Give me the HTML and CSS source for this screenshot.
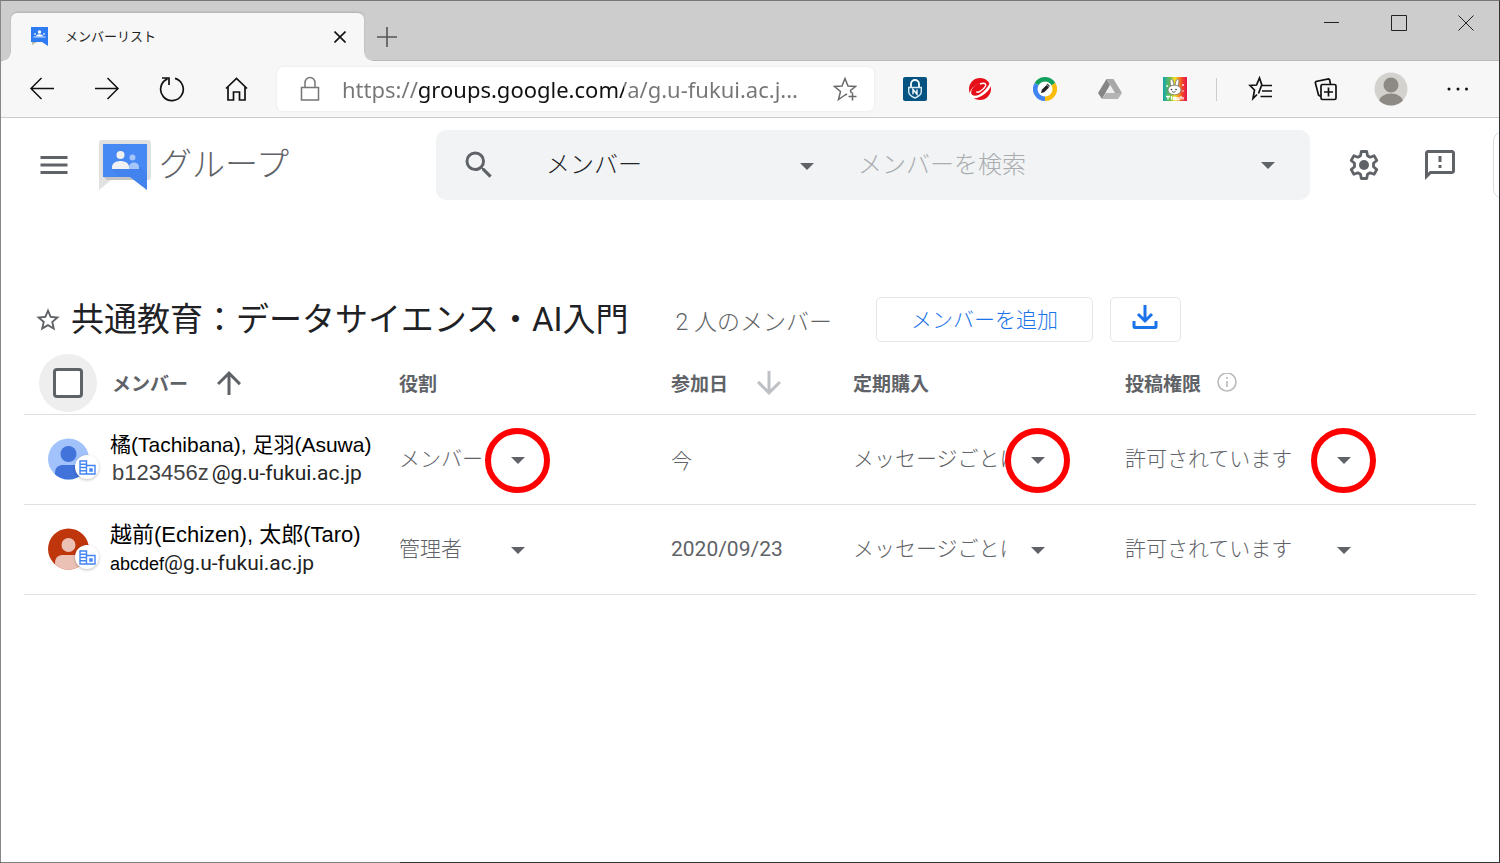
FILE: index.html
```html
<!DOCTYPE html>
<html lang="ja">

<head>
  <meta charset="UTF-8">
  <meta name="viewport" content="width=device-width, initial-scale=1.0">
  <title>メンバーリスト</title>
  <link rel="stylesheet" href="styles.css">
</head>

<body>
  <div class="window">
    <!-- Tab strip -->
    <div class="tab-strip">
      <div class="tab">
        <svg class="tab-icon" viewBox="0 0 18 20" width="18" height="20">
          <path d="M1 13h8l-8 5z" fill="#b8b8a8" />
          <path d="M0 0h17v19l-6-4H0z" fill="#2f7bf3" />
          <circle cx="8.500" cy="5" r="1.700" fill="#fff" />
          <path d="M5 9.500c0-3 7-3 7 0z" fill="#fff" />
          <path d="M2.500 9.500h12v1h-12z" fill="#cfe0ff" />
          <circle cx="4" cy="7" r="1" fill="#cfe0ff" />
          <circle cx="13" cy="7" r="1" fill="#cfe0ff" />
        </svg>
        <span class="tab-title">メンバーリスト</span>
        <button class="tab-close" aria-label="タブを閉じる">
          <svg viewBox="0 0 12 12" width="12" height="12" fill="none" stroke="#111" stroke-width="1.6">
            <path d="M.5.5l11 11M11.500.5l-11 11" />
          </svg>
        </button>
      </div>
      <button class="new-tab" aria-label="新しいタブ">
        <svg viewBox="0 0 20 20" width="20" height="20" fill="none" stroke="#555" stroke-width="1.6">
          <path d="M10 0v20M0 10h20" />
        </svg>
      </button>
      <div class="window-controls">
        <button aria-label="最小化">
          <svg viewBox="0 0 16 16" width="16" height="16" fill="none" stroke="#222"><path d="M0 7.500h15" /></svg>
        </button>
        <button aria-label="最大化">
          <svg viewBox="0 0 16 16" width="16" height="16" fill="none" stroke="#222"><path d="M.5.5h15v15H.5z" /></svg>
        </button>
        <button aria-label="閉じる">
          <svg viewBox="0 0 16 16" width="16" height="16" fill="none" stroke="#222"><path d="M.5.5l15 15M15.500.5l-15 15" /></svg>
        </button>
      </div>
    </div>

    <!-- Toolbar -->
    <div class="toolbar">
      <button class="tool" aria-label="戻る">
        <svg viewBox="0 0 26 26" width="26" height="26" fill="none" stroke="#111" stroke-width="1.500">
          <path d="M25 12.500H2M12.500 2L2 12.500 12.500 23" />
        </svg>
      </button>
      <button class="tool" aria-label="進む">
        <svg viewBox="0 0 26 26" width="26" height="26" fill="none" stroke="#111" stroke-width="1.500">
          <path d="M1 12.500h23M13.500 2L24 12.500 13.500 23" />
        </svg>
      </button>
      <button class="tool" aria-label="更新">
        <svg viewBox="0 0 26 26" width="26" height="26" fill="none" stroke="#111" stroke-width="1.700">
          <path d="M16 2.400A11.300 11.300 0 1 1 8.500 2.900M3 2h7v7" />
        </svg>
      </button>
      <button class="tool" aria-label="ホーム">
        <svg viewBox="0 0 26 26" width="26" height="26" fill="none" stroke="#111" stroke-width="1.700">
          <path d="M2 12.500L12.500 2.500l10.500 10M4 10.800V24h5.500v-8h6v8H21V10.800" />
        </svg>
      </button>

      <div class="address-bar">
        <svg class="lock" viewBox="0 0 20 26" width="20" height="26" fill="none" stroke="#767676" stroke-width="1.500">
          <path d="M1.500 11.500h17V24h-17zM5 11.500V7a5 5.500 0 0 1 10 0v4.500" />
        </svg>
        <input class="url" type="text" aria-label="アドレス" value="https://groups.google.com/a/g.u-fukui.ac.j...">
        <button class="add-favorite" aria-label="お気に入りに追加">
          <svg viewBox="0 0 24 24" width="24" height="24" fill="none" stroke="#6a6a6a" stroke-width="1.500">
            <path d="M12 18L5.500 22.500l2-8L1.500 9.500l7.500-.5L12 1.500 15 9l7.500.5-5 4 .8 2.500M19.500 15.500v8M15.500 19.500h8M12 18l2-1" />
          </svg>
        </button>
      </div>

      <button class="tool" aria-label="パスワード管理">
        <svg viewBox="0 0 24 24" width="24" height="24">
          <rect width="24" height="24" rx="2" fill="#065381" />
          <path d="M8 10.500V7a4 4 0 0 1 8 0v3.500" fill="none" stroke="#fff" stroke-width="1.800" />
          <path d="M5.700 10.500h12.600v4c0 3.500-2.700 5-6.300 6.500-3.600-1.500-6.300-3-6.300-6.500z" fill="#065381" stroke="#d8eaf4" stroke-width="1.400" />
          <path d="M10 17.300v-4.800l4 4.800v-4.800" fill="none" stroke="#fff" stroke-width="1.400" />
        </svg>
      </button>
      <button class="tool" aria-label="セキュリティ">
        <svg viewBox="0 0 24 24" width="24" height="24">
          <circle cx="12" cy="12" r="11" fill="#e60f19" />
          <path d="M13 5.500C6 7.500 2 13.500 3.500 17c1.500 3 7.500 2 12-2.500 4-3.500 6.500-8 7-11l1 3c-.5 4-3.500 8-7 10.500-5 4-10.500 5.500-13.500 3C-.5 16.500 4 8 13 5.500z" fill="#fff" />
          <path d="M12 7c4-1.500 6.500-.5 5.500 2-.8 2-3 4-5.500 5.500-2 1-3.500 1-3.500 0" fill="none" stroke="#fff" stroke-width="1.400" />
        </svg>
      </button>
      <button class="tool" aria-label="アプリランチャー">
        <svg viewBox="0 0 24 24" width="24" height="24">
          <path d="M12 12L1.600 6A12 12 0 0 1 22.400 6z" fill="#12a15c" />
          <path d="M12 12L22.400 6A12 12 0 0 1 12 24z" fill="#fbbb0b" />
          <path d="M12 12v12A12 12 0 0 1 1.600 6z" fill="#4285f4" />
          <circle cx="12" cy="12" r="7.500" fill="#fff" />
          <path d="M8 16l.8-3.200 4.800-4.800 2.400 2.400-4.800 4.800z" fill="#222" />
          <path d="M13.500 7.500l1-1 2.500 2.500-1 1z" fill="#444" />
        </svg>
      </button>
      <button class="tool" aria-label="ドライブ">
        <svg viewBox="0 0 24 24" width="24" height="24">
          <path d="M8.500 2h7L24 16h-7z" fill="#a8a8a8" />
          <path d="M8.500 2L12 8 4 22l-4-6z" fill="#858585" />
          <path d="M8 16h16l-4 6H4z" fill="#b4b4b4" />
          <path d="M12 8.500l4.300 7.500H8z" fill="#eee" />
        </svg>
      </button>
      <button class="tool" aria-label="拡張機能">
        <svg viewBox="0 0 24 24" width="24" height="24">
          <defs>
            <linearGradient id="rainbow">
              <stop offset="0" stop-color="#12a5ad" />
              <stop offset=".3" stop-color="#6cc04a" />
              <stop offset=".5" stop-color="#fbe21b" />
              <stop offset=".8" stop-color="#f0452c" />
              <stop offset="1" stop-color="#e5124f" />
            </linearGradient>
          </defs>
          <rect width="24" height="24" fill="url(#rainbow)" />
          <g fill="#fff" stroke="#666" stroke-width=".7">
            <ellipse cx="9" cy="6.500" rx="1.700" ry="4.500" transform="rotate(-10 9 6.500)" />
            <ellipse cx="14" cy="6.500" rx="1.700" ry="4.500" transform="rotate(10 14 6.500)" />
            <ellipse cx="11.500" cy="13" rx="6.500" ry="4.800" />
          </g>
          <circle cx="8.500" cy="12.500" r=".8" fill="#333" />
          <circle cx="13" cy="12.500" r=".8" fill="#333" />
          <path d="M9 14.500q1.800 1.500 3.500 0" fill="none" stroke="#333" stroke-width=".8" />
          <path d="M3 19.500h4M5 19.500v3M8.500 19v3.500M10.500 20.500h2v2h-2zM14 20v2.500h2V20M18 19v3.500M20 20v2.500" fill="none" stroke="#fff" stroke-width="1.300" />
          <path d="M4 8v2M3 9h2M20 7v2M19 8h2M19 14h2" stroke="#fff" stroke-width=".8" />
        </svg>
      </button>
      <span class="tool-separator"></span>
      <button class="tool" aria-label="お気に入り">
        <svg viewBox="0 0 26 26" width="26" height="26" fill="none" stroke="#111" stroke-width="1.700">
          <path d="M9 18.500L5 22.500l1.500-8.500L2 9.500l6.500-.5L11.500 2l2.500 7.500h10M14 15h10M12.500 20.500H24M13.500 9.500l-3 8" />
        </svg>
      </button>
      <button class="tool" aria-label="コレクション">
        <svg viewBox="0 0 26 26" width="26" height="26" fill="none" stroke="#111" stroke-width="1.700">
          <rect x="8" y="8.500" width="15" height="15" rx="1.500" />
          <path d="M15.500 11.500v9M11 16h9M17.500 8l-1-4.500-1-.7L3 5.500l-.7 1.200L5.500 19l1.200 1L8 20" />
        </svg>
      </button>
      <button class="tool" aria-label="プロファイル">
        <svg viewBox="0 0 34 34" width="34" height="34">
          <defs><clipPath id="profile"><circle cx="17" cy="17" r="16.500" /></clipPath></defs>
          <circle cx="17" cy="17" r="16.500" fill="#d4d2ce" />
          <g clip-path="url(#profile)" fill="#8d8984">
            <circle cx="17" cy="13" r="7.500" />
            <ellipse cx="17" cy="30" rx="12" ry="8.500" />
          </g>
        </svg>
      </button>
      <button class="tool" aria-label="設定など">
        <svg viewBox="0 0 24 6" width="24" height="6" fill="#111">
          <circle cx="5" cy="3" r="1.500" /><circle cx="14" cy="3" r="1.500" /><circle cx="22.500" cy="3" r="1.500" />
        </svg>
      </button>
    </div>

    <!-- App header -->
    <header class="app-header">
      <button class="menu-button" aria-label="メインメニュー">
        <svg viewBox="0 0 24 24" width="36" height="36" fill="#5f6368">
          <path d="M3 18h18v-2H3v2zm0-5h18v-2H3v2zm0-7v2h18V6H3z" />
        </svg>
      </button>
      <a class="brand" href="#">
        <svg viewBox="0 0 52 52" width="52" height="52">
          <path d="M3 1h46a3 3 0 0 1 3 3v34a3 3 0 0 1-3 3H12L0 51V4a3 3 0 0 1 3-3z" fill="#e1e1e1" />
          <path d="M4 37h28l4 4H8z" fill="#c4c4c4" />
          <path d="M4 5h44v46L31 38H4z" fill="#4688f4" />
          <path d="M13 30l17-1 12-1 6 6v17L31 38H20z" fill="#3f7de6" opacity=".4" />
          <circle cx="33.500" cy="18.500" r="3" fill="#a5c5fb" />
          <path d="M30 30v-2c0-6 10-6 10 0v2z" fill="#a5c5fb" />
          <circle cx="21.500" cy="16" r="4" fill="#f1f1f1" />
          <path d="M13 30v-2c0-8 17-8 17 0v2z" fill="#f1f1f1" />
        </svg>
        <span>グループ</span>
      </a>

      <form class="search" role="search">
        <button class="search-button" type="button" aria-label="検索">
          <svg viewBox="0 0 24 24" width="36" height="36" fill="#5f6368">
            <path d="M15.500 14h-.79l-.28-.27A6.471 6.471 0 0 0 16 9.500 6.500 6.500 0 1 0 9.500 16c1.610 0 3.090-.59 4.230-1.570l.27.28v.79l5 4.990L20.490 19l-4.990-5zm-6 0C7.010 14 5 11.990 5 9.500S7.010 5 9.500 5 14 7.010 14 9.500 11.990 14 9.500 14z" />
          </svg>
        </button>
        <div class="dropdown dropdown-scope">
          <select aria-label="検索対象">
            <option>メンバー</option>
            <option>会話</option>
          </select>
        </div>
        <input class="search-input" type="search" aria-label="メンバーを検索" placeholder="メンバーを検索">
        <button class="search-options" type="button" aria-label="検索オプション"></button>
      </form>

      <button class="header-button" aria-label="設定">
        <svg viewBox="0 0 36 36" width="36" height="36" fill="none" stroke="#5f6368" stroke-width="2.800" stroke-linejoin="round">
          <path d="M15.300 4.500h5.400l.8 4.200 2.600 1.500 4-1.500 2.700 4.700-3.300 2.800v3.600l3.300 2.800-2.700 4.700-4-1.500-2.600 1.500-.8 4.200h-5.400l-.8-4.200-2.600-1.500-4 1.500-2.700-4.700 3.300-2.800v-3.600l-3.300-2.800 2.700-4.700 4 1.500 2.600-1.500z" />
          <circle cx="18" cy="18" r="5" fill="#5f6368" stroke="none" />
        </svg>
      </button>
      <button class="header-button" aria-label="フィードバックを送信">
        <svg viewBox="0 0 24 24" width="36" height="36" fill="#5f6368">
          <path d="M20 2H4c-1.100 0-1.990.9-1.990 2L2 22l4-4h14c1.100 0 2-.9 2-2V4c0-1.100-.9-2-2-2zm0 14H5.170L4 17.170V4h16v12zM11 12h2v2h-2zm0-6h2v4h-2z" />
        </svg>
      </button>
      <div class="account-card"></div>
    </header>

    <!-- Member list -->
    <main class="content">
      <div class="title-row">
        <button class="star" aria-label="スターを付ける">
          <svg viewBox="0 0 24 24" width="28" height="28" fill="#5f6368">
            <path d="M22 9.240l-7.190-.62L12 2 9.190 8.630 2 9.240l5.460 4.730L5.820 21 12 17.270 18.180 21l-1.630-7.030L22 9.240zM12 15.400l-3.760 2.270 1-4.280-3.320-2.880 4.380-.38L12 6.100l1.710 4.040 4.380.38-3.320 2.880 1 4.280L12 15.400z" />
          </svg>
        </button>
        <h1>共通教育：データサイエンス・AI入門</h1>
        <span class="member-count">2 人のメンバー</span>
        <button class="add-member">メンバーを追加</button>
        <button class="download" aria-label="ダウンロード">
          <svg viewBox="0 0 26 26" width="26" height="26" fill="none" stroke="#1a73e8" stroke-width="3">
            <path d="M13 1v16M6 10l7 7 7-7M2 17v5.500a1 1 0 0 0 1 1h20a1 1 0 0 0 1-1V17" />
          </svg>
        </button>
      </div>

      <table class="members">
        <thead>
          <tr>
            <th class="col-member">
              <div class="head-cell head-member">
                <label class="check-all"><input type="checkbox" aria-label="すべて選択"></label>
                <span>メンバー</span>
                <button class="sort" aria-label="メンバーで並べ替え">
                  <svg viewBox="0 0 24 24" width="36" height="36" fill="#5f6368">
                    <path d="M4 12l1.410 1.410L11 7.830V20h2V7.830l5.580 5.590L20 12l-8-8-8 8z" />
                  </svg>
                </button>
              </div>
            </th>
            <th class="col-role">役割</th>
            <th class="col-joined">
              <div class="head-cell">
                <span>参加日</span>
                <button class="sort" aria-label="参加日で並べ替え">
                  <svg viewBox="0 0 24 24" width="36" height="36" fill="#bdc1c6">
                    <path d="M20 12l-1.410-1.410L13 16.170V4h-2v12.170l-5.580-5.590L4 12l8 8 8-8z" />
                  </svg>
                </button>
              </div>
            </th>
            <th class="col-subscription">定期購入</th>
            <th>
              <div class="head-cell head-posting">
                <span>投稿権限</span>
                <svg viewBox="0 0 20 20" width="20" height="20" fill="none" stroke="#bbb" stroke-width="1.600">
                  <circle cx="10" cy="9" r="9" />
                  <path d="M10 8v6M10 4v2" />
                </svg>
              </div>
            </th>
          </tr>
        </thead>
        <tbody>
          <tr>
            <td>
              <div class="member">
                <div class="avatar">
                  <svg viewBox="0 0 42 42" width="42" height="42">
                    <defs><clipPath id="avatar"><circle cx="20.500" cy="21" r="20.500" /></clipPath></defs>
                    <circle cx="20.500" cy="21" r="20.500" fill="#a1c2fa" />
                    <g clip-path="url(#avatar)" fill="#4173db">
                      <circle cx="20.500" cy="16" r="8" />
                      <path d="M7 42v-7c0-6 4-8 8-8h12c4 0 8 2 8 8v7z" />
                    </g>
                  </svg>
                  <span class="badge">
                    <svg viewBox="0 0 17 15" width="17" height="15" fill="none" stroke="#4285f4" stroke-width="1.400">
                      <path d="M1 1h6.500v13H1zM1 4.200h6.500M1 7.500h6.500M1 10.800h6.500M7.500 5.500H16V14H7.500z" />
                      <path d="M11 9h2v2h-2z" fill="#4285f4" />
                    </svg>
                  </span>
                </div>
                <div>
                  <div class="member-name member-name-long">橘(Tachibana), 足羽(Asuwa)</div>
                  <div class="member-mail"><span class="mail-user">b123456z</span>@g.u-fukui.ac.jp</div>
                </div>
              </div>
            </td>
            <td>
              <div class="dropdown dropdown-role marked">
                <select aria-label="橘の役割">
                  <option>メンバー</option>
                  <option>管理者</option>
                </select>
              </div>
            </td>
            <td>今</td>
            <td>
              <div class="dropdown dropdown-subscription marked">
                <select aria-label="橘の定期購入">
                  <option>メッセージごとに配信</option>
                </select>
              </div>
            </td>
            <td>
              <div class="dropdown dropdown-posting marked">
                <select aria-label="橘の投稿権限">
                  <option>許可されています</option>
                </select>
              </div>
            </td>
          </tr>
          <tr>
            <td>
              <div class="member">
                <div class="avatar">
                  <svg viewBox="0 0 42 42" width="42" height="42">
                    <circle cx="20.500" cy="21" r="20.500" fill="#bf360c" />
                    <g clip-path="url(#avatar)" fill="#ebc1b6">
                      <circle cx="20.500" cy="17" r="7" />
                      <path d="M7 42v-7c0-6 4-8 8-8h12c4 0 8 2 8 8v7z" />
                    </g>
                  </svg>
                  <span class="badge">
                    <svg viewBox="0 0 17 15" width="17" height="15" fill="none" stroke="#4285f4" stroke-width="1.400">
                      <path d="M1 1h6.500v13H1zM1 4.200h6.500M1 7.500h6.500M1 10.800h6.500M7.500 5.500H16V14H7.500z" />
                      <path d="M11 9h2v2h-2z" fill="#4285f4" />
                    </svg>
                  </span>
                </div>
                <div>
                  <div class="member-name">越前(Echizen), 太郎(Taro)</div>
                  <div class="member-mail"><span class="mail-user-small">abcdef</span>@g.u-fukui.ac.jp</div>
                </div>
              </div>
            </td>
            <td>
              <div class="dropdown dropdown-role">
                <select aria-label="越前の役割">
                  <option>管理者</option>
                  <option>メンバー</option>
                </select>
              </div>
            </td>
            <td class="date">2020/09/23</td>
            <td>
              <div class="dropdown dropdown-subscription">
                <select aria-label="越前の定期購入">
                  <option>メッセージごとに配信</option>
                </select>
              </div>
            </td>
            <td>
              <div class="dropdown dropdown-posting">
                <select aria-label="越前の投稿権限">
                  <option>許可されています</option>
                </select>
              </div>
            </td>
          </tr>
        </tbody>
      </table>
    </main>
  </div>
</body>

</html>
```

FILE: styles.css
```css
*,
*::before,
*::after {
  margin: 0;
  padding: 0;
  box-sizing: border-box;
}

body {
  font-family: Roboto, "Noto Sans CJK JP", sans-serif;
  color: #5f6368;
  background-color: #fff;
}

svg {
  display: block;
  flex: none;
}

button,
input,
select {
  font: inherit;
  color: inherit;
  border: none;
  background: none;
  outline: none;
}

button {
  display: flex;
  justify-content: center;
  align-items: center;
  cursor: pointer;
}

.window {
  position: relative;
  display: flex;
  flex-direction: column;
  min-height: 100vh;
  border: 1px solid #333;
  border-top-color: #777;
  border-left-color: #888;
}

.window::after {
  content: "";
  position: absolute;
  left: 0;
  bottom: -1px;
  width: 399px;
  height: 1px;
  background-color: #808080;
}

/* Tab strip */
.tab-strip {
  display: flex;
  align-items: flex-end;
  height: 60px;
  padding-left: 10px;
  background-color: #cdcdcd;
  box-shadow: inset 0 -1px #bababa;
}

.tab {
  position: relative;
  display: flex;
  align-items: center;
  width: 353px;
  height: 48px;
  padding: 0 18px 0 20px;
  border-radius: 6px 6px 0 0;
  background-color: #f7f7f7;
  box-shadow: 0 -1px 2px rgba(0, 0, 0, 0.15);
}

.tab::before,
.tab::after {
  content: "";
  position: absolute;
  bottom: 0;
  width: 8px;
  height: 8px;
}

.tab::before {
  left: -8px;
  background: radial-gradient(circle at 0 0, #cdcdcd 7px, #f7f7f7 8px);
}

.tab::after {
  right: -8px;
  background: radial-gradient(circle at 100% 0, #cdcdcd 7px, #f7f7f7 8px);
}

.tab-title {
  flex: 1;
  padding: 0 0 4px 16px;
  font-size: 13px;
  color: #222;
}

.tab-close {
  width: 12px;
  height: 12px;
}

.new-tab {
  width: 46px;
  height: 48px;
}

.window-controls {
  display: flex;
  align-self: flex-start;
  margin-left: auto;
}

.window-controls button {
  width: 67px;
  height: 44px;
}

/* Toolbar */
.toolbar {
  display: flex;
  align-items: center;
  height: 57px;
  padding: 0 11px 0 8px;
  background-color: #f7f7f7;
  border-bottom: 1px solid #ccc;
}

.tool {
  flex: none;
  width: 65px;
  height: 44px;
}

.tool-separator {
  width: 1px;
  height: 23px;
  margin: 0 11px 0 9px;
  background-color: #ccc;
}

.address-bar {
  display: flex;
  align-items: center;
  flex: 1;
  min-width: 0;
  height: 44px;
  margin: 0 8px;
  padding: 0 17px 0 23px;
  border-radius: 6px;
  background-color: #fff;
  box-shadow: 0 0 3px rgba(0, 0, 0, 0.08);
}

.url {
  flex: 1;
  min-width: 0;
  height: 44px;
  margin-left: 22px;
  font-family: "Noto Sans", sans-serif;
  font-size: 22px;
  color: #767676;
  /* host name is darker than the rest of the address */
  background: linear-gradient(to right, #767676 77px, #111 77px, #111 282px, #767676 282px);
  -webkit-background-clip: text;
  background-clip: text;
  -webkit-text-fill-color: transparent;
}

.add-favorite {
  width: 24px;
  height: 44px;
}

/* App header */
.app-header {
  display: flex;
  align-items: center;
  padding: 12px 0 12px 35px;
  overflow: hidden;
}

.menu-button {
  flex: none;
  width: 36px;
  height: 36px;
}

.brand {
  display: flex;
  align-items: center;
  flex: none;
  gap: 8px;
  width: 337px;
  margin-left: 27px;
  font-size: 33px;
  font-weight: 300;
  line-height: 48px;
  color: #5f6368;
  text-decoration: none;
}

.search {
  display: flex;
  align-items: center;
  flex: 1;
  min-width: 0;
  height: 70px;
  padding: 0 24px 0 25px;
  border-radius: 10px;
  background-color: #f1f3f4;
  font-size: 24px;
  font-weight: 300;
}

.search-button {
  flex: none;
  width: 36px;
  height: 36px;
}

.search-input {
  flex: 1;
  min-width: 0;
  height: 48px;
  margin-left: 44px;
  color: #202124;
}

.search-input::placeholder {
  color: #aaadb0;
}

.search-options {
  width: 36px;
  height: 48px;
}

.header-button {
  flex: none;
  width: 36px;
  height: 36px;
  margin-left: 36px;
}

.header-button + .header-button {
  margin-left: 40px;
}

.account-card {
  flex: none;
  width: 200px;
  height: 68px;
  margin: 0 -194px 0 35px;
  border: 1px solid #dadce0;
  border-radius: 10px;
}

/* Drop-downs */
.dropdown {
  position: relative;
}

.dropdown select {
  display: block;
  width: 100%;
  height: 40px;
  padding-right: 38px;
  appearance: none;
  cursor: pointer;
}

.dropdown::after,
.search-options::after {
  content: "";
  border: 7px solid transparent;
  border-top-color: #5f6368;
  border-bottom: none;
}

.dropdown::after {
  position: absolute;
  top: 18px;
  right: 0;
  pointer-events: none;
}

.dropdown-scope {
  flex: none;
  width: 268px;
  margin-left: 49px;
  color: #202124;
}

.dropdown-role {
  width: 126px;
}

.dropdown-subscription {
  width: 192px;
}

.dropdown-posting {
  width: 226px;
}

/* Red ring round the arrow */
.marked::before {
  content: "";
  position: absolute;
  top: -11px;
  right: -25px;
  width: 65px;
  height: 65px;
  border: 6px solid #f00;
  border-radius: 50%;
  pointer-events: none;
}

/* Title */
.content {
  padding: 85px 23px 0;
}

.title-row {
  display: flex;
  align-items: center;
  height: 45px;
  padding-left: 10px;
  white-space: nowrap;
}

.star {
  width: 28px;
  height: 28px;
}

h1 {
  margin-left: 9px;
  font-size: 33px;
  font-weight: 400;
  line-height: 44px;
  color: #202124;
}

.member-count {
  margin-left: 47px;
  font-size: 23px;
  font-weight: 300;
}

.add-member,
.download {
  height: 45px;
  border: 1px solid #e4e6e8;
  border-radius: 5px;
}

.add-member {
  width: 217px;
  margin-left: 44px;
  padding-bottom: 3px;
  font-size: 21px;
  font-weight: 300;
  color: #1a73e8;
}

.download {
  width: 71px;
  margin-left: 17px;
  padding-bottom: 6px;
}

/* Table */
.members {
  width: 100%;
  margin-top: 10px;
  border-collapse: collapse;
  table-layout: fixed;
  font-size: 21px;
}

.members th {
  height: 62px;
  font-size: 19px;
  font-weight: 700;
  text-align: left;
  border-bottom: 1px solid #e0e0e0;
}

.members td {
  height: 90px;
  font-weight: 300;
  border-bottom: 1px solid #e0e0e0;
}

.members .date {
  font-weight: 400;
}

.col-member {
  width: 375px;
}

.col-role {
  width: 272px;
}

.col-joined {
  width: 182px;
}

.col-subscription {
  width: 272px;
}

.head-cell {
  display: flex;
  align-items: center;
  gap: 23px;
}

.head-posting {
  gap: 16px;
}

.head-member {
  padding-left: 15px;
}

.check-all {
  display: flex;
  justify-content: center;
  align-items: center;
  width: 58px;
  height: 58px;
  margin-right: -8px;
  border-radius: 50%;
  background-color: #eee;
}

.check-all input {
  width: 30px;
  height: 30px;
  border: 3px solid #5f6368;
  border-radius: 4px;
  background-color: #fff;
  appearance: none;
}

.check-all input:checked {
  background-color: #1a73e8;
}

.sort {
  width: 36px;
  height: 36px;
}

.member {
  display: flex;
  align-items: center;
  gap: 20px;
  padding-left: 24px;
  font-weight: 400;
  white-space: nowrap;
}

.avatar {
  position: relative;
}

.badge {
  position: absolute;
  right: -9px;
  bottom: 1px;
  display: flex;
  justify-content: center;
  align-items: center;
  width: 24px;
  height: 24px;
  border-radius: 50%;
  background-color: #fff;
  box-shadow: 0 1px 3px rgba(0, 0, 0, 0.25);
}

.member-name {
  font-family: "Liberation Sans", "Noto Sans CJK JP", sans-serif;
  font-size: 22px;
  line-height: 28px;
  color: #000;
}

.member-name-long {
  font-size: 21px;
}

.member-mail {
  font-size: 21px;
  line-height: 28px;
  color: #222;
}

.mail-user,
.mail-user-small {
  font-family: "Liberation Sans", sans-serif;
}

.mail-user {
  padding: 0 3px 0 2px;
  font-size: 22px;
  color: #444;
}

.mail-user-small {
  font-size: 18px;
  color: #000;
}
```
